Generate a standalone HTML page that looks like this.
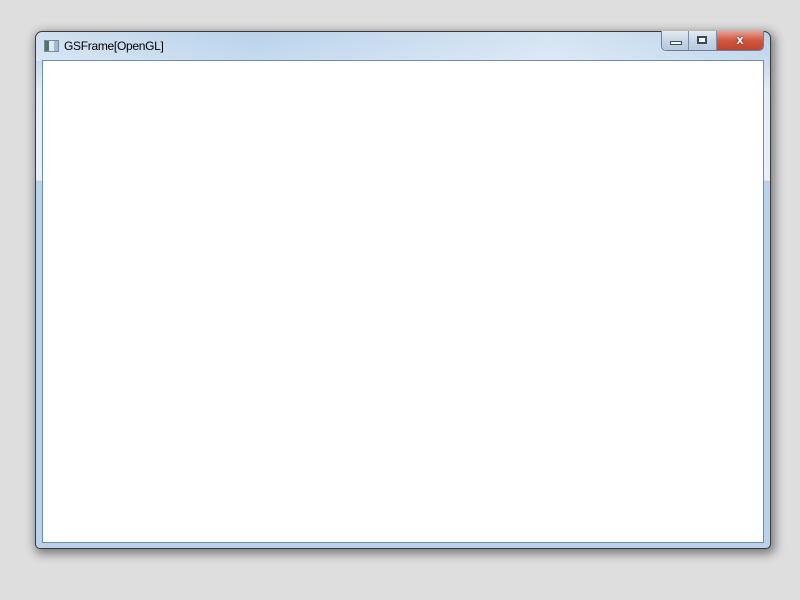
<!DOCTYPE html>
<html><head><style>
body{margin:0;width:800px;height:600px;background:#dedede;position:relative;overflow:hidden;font-family:"Liberation Sans",sans-serif}
.win{position:absolute;left:35px;top:31px;width:734px;height:516px;border:1px solid #3a3a3a;border-radius:7px 7px 5px 5px;
background:linear-gradient(to bottom,#b9d2ea 0px,#c6dbef 30px,#e4edf7 60px,#e8eff8 148px,#b9d1ea 149px,#b9d1ea 100%);
box-shadow:2px 3px 10px 2px rgba(0,0,0,.45)}
.title{position:absolute;left:0;top:0;width:734px;height:29px;border-radius:6px 6px 0 0;
background:linear-gradient(90deg,rgba(255,255,255,.3),rgba(255,255,255,0) 30%,rgba(255,255,255,.4) 70%,rgba(255,255,255,0))}
.client{position:absolute;left:6px;top:28px;width:720px;height:481px;background:#fff;border:1px solid #6f8fae}
.t{position:absolute;left:28px;top:7px;font-size:12px;letter-spacing:-0.3px;color:#000}
.ic{position:absolute;left:8px;top:8px;width:13px;height:10px;border:1px solid #7a8a99;background:linear-gradient(90deg,#4b7a6a 0 4px,#dfe8ef 4px 9px,#9fb8d0 9px)}
.btns{position:absolute;left:625px;top:-1px;height:19px;width:101px;border:1px solid #6d7f95;border-top:none;border-radius:0 0 5px 5px;overflow:hidden;display:flex}
.b{height:19px;background:linear-gradient(#e3ebf4,#c8d6e6 50%,#b9cade);border-right:1px solid #7d8ea3;position:relative}
.c{background:linear-gradient(#e8a294,#d0573f 50%,#c2432c);border:none;flex:1;color:#fff;font-size:13px;font-weight:bold;text-align:center;line-height:18px;text-shadow:0 0 2px #333}
</style></head><body>
<div class="win">
<div class="title"></div>
<div class="ic"></div>
<div class="t">GSFrame[OpenGL]</div>
<div class="btns">
<div class="b" style="width:26px"><div style="position:absolute;left:8px;top:10px;width:10px;height:2px;border:1px solid #3a4a5c;background:#fff"></div></div>
<div class="b" style="width:27px"><div style="position:absolute;left:8px;top:5px;width:8px;height:6px;border:1px solid #3a4a5c;background:#fff;box-shadow:inset 0 0 0 1px #3a4a5c,inset 0 0 0 2px #fff"></div></div>
<div class="b c">x</div>
</div>
<div class="client"></div>
</div>
</body></html>
